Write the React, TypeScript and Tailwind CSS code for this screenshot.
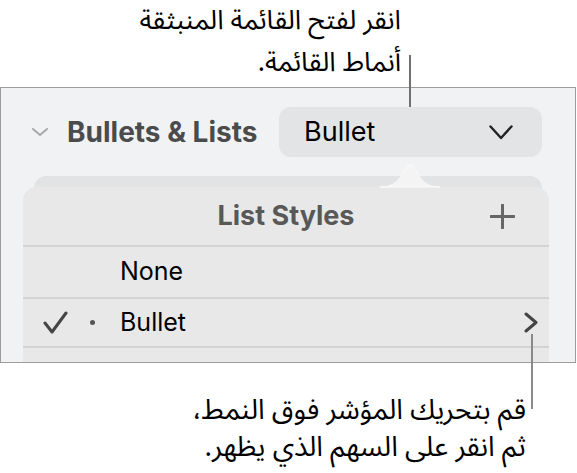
const arabic = "font-['Noto_Sans_Arabic','DejaVu_Sans',sans-serif]"

function Chevron({ className, d, width, height, stroke, color }: { className?: string; d: string; width: number; height: number; stroke: number; color: string }) {
  return (
    <svg className={className} width={width} height={height} viewBox={`0 0 ${width} ${height}`} fill="none">
      <path d={d} stroke={color} strokeWidth={stroke} strokeLinecap="round" strokeLinejoin="round" />
    </svg>
  )
}

export default function App() {
  return (
    <div className="relative w-[577px] h-[473px] overflow-hidden bg-white font-['Inter',sans-serif]">
      {/* top caption */}
      <div dir="rtl" className={`pr-[176px] text-right text-[27px] leading-[42px] text-black ${arabic}`}>
        <p>انقر لفتح القائمة المنبثقة</p>
        <p>أنماط القائمة.</p>
      </div>

      {/* sidebar frame */}
      <div className="mt-[3px] w-[576px] h-[276px] border border-[#9d9d9d] bg-[#f1f2f4] overflow-hidden">
        <div className="flex items-center h-[50px] mt-[19px]">
          <Chevron className="ml-[31px]" width={16} height={8} d="M1 1 L8 7 L15 1" stroke={2} color="#a9a9a9" />
          <span className="ml-[19px] text-[28px] font-bold text-[#4b4b4b]">Bullets &amp; Lists</span>
          <button className="ml-auto mr-[33px] flex items-center justify-between w-[263px] h-[50px] rounded-[12px] bg-[#e3e4e6] pl-[25px] pr-[29px]">
            <span className="text-[27px] text-black">Bullet</span>
            <Chevron width={24} height={15} d="M1.5 1.5 L12 13 L22.5 1.5" stroke={2.4} color="#222" />
          </button>
        </div>

        {/* popover stack */}
        <div className="mt-[19px] ml-[33px] mr-[33px] rounded-t-[12px] bg-[#e2e3e5] pt-[11px]">
          <div className="-ml-[11px] -mr-[7px] rounded-t-[14px] bg-[#e8e8e8]">
            <div className="grid grid-cols-[1fr_auto_1fr] items-center h-[58px]">
              <div />
              <span className="text-[27px] font-bold text-[#585858]">List Styles</span>
              <div className="flex justify-end pr-[34px]">
                <svg width="25" height="25" viewBox="0 0 25 25">
                  <path d="M12.5 1 V24 M1 12.5 H24" stroke="#666" strokeWidth="3" strokeLinecap="round" />
                </svg>
              </div>
            </div>
            <div className="h-[2px] bg-[#d3d3d3]" />
            <div className="flex items-center h-[50px] pl-[97px] text-[25px] text-black">None</div>
            <div className="h-[2px] bg-[#d3d3d3]" />
            <div className="flex items-center h-[47px] text-[25px] text-black">
              <div className="flex items-center w-[97px] pl-[20px]">
                <Chevron width={25} height={23} d="M2 12 L9 21 L23 2" stroke={3} color="#444" />
                <span className="ml-[22px] w-[5px] h-[5px] rounded-full bg-[#555]" />
              </div>
              <span>Bullet</span>
              <Chevron className="ml-auto mr-[11px]" width={14} height={21} d="M2 2 L12 10.5 L2 19" stroke={3} color="#444" />
            </div>
            <div className="h-[2px] bg-[#d3d3d3]" />
            <div className="h-[40px]" />
          </div>
        </div>
      </div>

      {/* bottom caption */}
      <div dir="rtl" className={`mt-[29px] pr-[51px] text-right text-[28px] leading-[37px] text-black ${arabic}`}>
        <p>قم بتحريك المؤشر فوق النمط،</p>
        <p>ثم انقر على السهم الذي يظهر.</p>
      </div>

      {/* popover beak */}
      <svg className="absolute left-[380px] top-[162px]" width="60" height="26" viewBox="0 0 60 26">
        <path d="M0 25 C14 25 19 19 24 8 Q30 -2 36 8 C41 19 46 25 60 25 Z" fill="#f4f4f5" stroke="#fbfbfb" strokeWidth="1" />
      </svg>

      {/* leader lines */}
      <div className="absolute left-[409px] top-[55px] w-[2px] h-[52px] bg-[#707070]" />
      <div className="absolute left-[531px] top-[334px] w-[2px] h-[75px] bg-[#8a8a8a]" />
    </div>
  )
}
